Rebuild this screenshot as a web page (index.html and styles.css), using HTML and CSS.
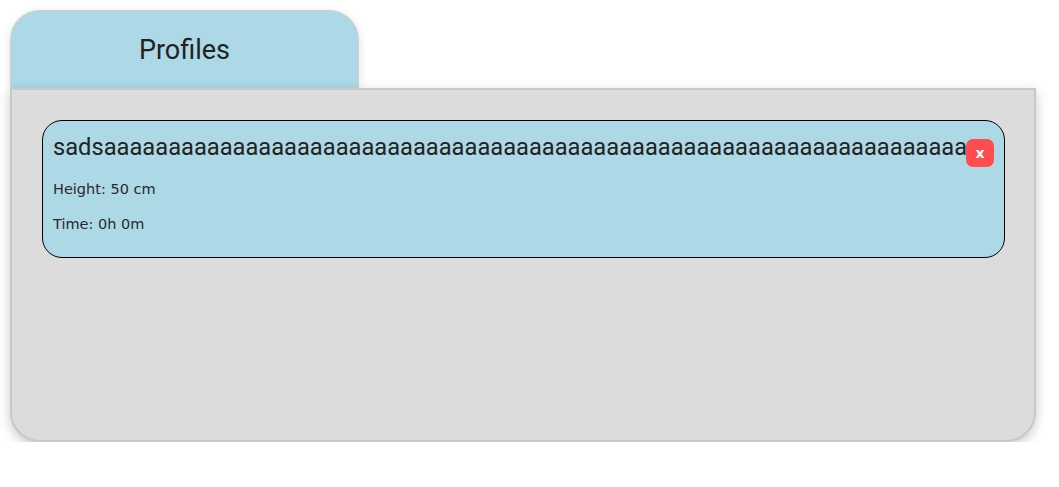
FILE: index.html
```html
<!DOCTYPE html>
<html>
<head>
<meta charset="utf-8">
<link rel="stylesheet" href="styles.css">
</head>
<body>
<div class="wrap">
  <div class="tab">Profiles</div>
  <div class="panel">
    <div class="card">
      <div class="card-head">
        <div class="card-title">sads<!--
        -->aaaaaaaaaa<!--
        -->aaaaaaaaaa<!--
        -->aaaaaaaaaa<!--
        -->aaaaaaaaaa<!--
        -->aaaaaaaaaa<!--
        -->aaaaaaaaaa<!--
        -->aaaaaaa</div>
        <button class="close">x</button>
      </div>
      <p class="info first">Height: 50 cm</p>
      <p class="info">Time: 0h 0m</p>
    </div>
  </div>
</div>
</body>
</html>
```
FILE: styles.css
```css
html, body { margin: 0; padding: 0; background: #fff; }
body { font-family: Roboto, "Liberation Sans", sans-serif; }
.wrap { padding: 10px 0 0 10px; width: 1026px; }
.tab {
  width: 347px;
  height: 77px;
  border: 1px solid #cfcfcf;
  border-bottom: none;
  border-radius: 30px 30px 0 0;
  background: #add8e6;
  display: flex;
  align-items: center;
  justify-content: center;
  font-size: 27px;
  color: #222;
  box-shadow: 0 2px 10px rgba(0,0,0,0.12);
  position: relative;
  z-index: 1;
}
.panel {
  position: relative;
  z-index: 2;
  background: #dcdcdc;
  border: 2px solid #c8c8c8;
  border-radius: 0 0 30px 30px;
  box-shadow: 0 4px 12px rgba(0,0,0,0.22);
  padding: 30px 29px 0 30px;
  box-sizing: border-box;
  height: 354px;
}
.card {
  background: #add8e6;
  border: 1px solid #000;
  border-radius: 20px;
  padding: 10px;
  height: 138px;
  box-sizing: border-box;
}
.card-head { display: flex; align-items: flex-start; }
.card-title {
  flex: 1;
  min-width: 0;
  white-space: nowrap;
  font-size: 23.7px;
  line-height: 28px;
  margin-top: 2px;
  color: #222;
}
.close {
  flex: none;
  width: 28px;
  height: 28px;
  margin-top: 8px;
  border: none;
  border-radius: 7px;
  background: #ff4d4f;
  color: #fff;
  font-family: "DejaVu Sans", sans-serif;
  font-weight: bold;
  font-size: 14px;
  padding: 0;
}
.info {
  margin: 15px 0 0 0;
  font-family: "DejaVu Sans", sans-serif;
  font-size: 14.5px;
  line-height: 20px;
  color: #2a2a2a;
}
.info.first { margin-top: 12px; }
```
